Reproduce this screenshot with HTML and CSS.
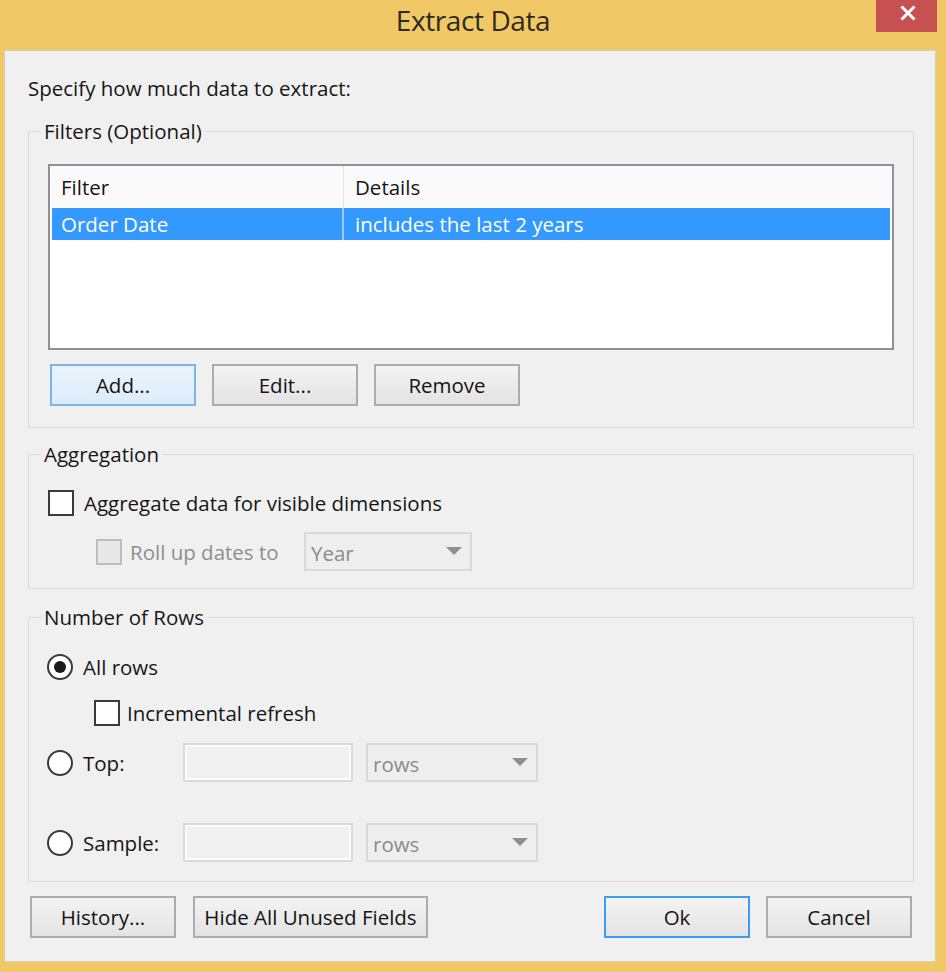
FILE: index.html
```html
<!DOCTYPE html>
<html>
<head>
<meta charset="utf-8">
<title>Extract Data</title>
<link rel="stylesheet" href="styles.css">
</head>
<body>
<div class="window">
  <div class="titlebar">
    <div class="tb-spacer"></div>
    <div class="title">Extract Data</div>
    <div class="close">
      <svg width="18" height="16" viewBox="0 0 18 16"><path d="M2.5 1.5 L15.5 14.5 M15.5 1.5 L2.5 14.5" stroke="#fff" stroke-width="3" stroke-linecap="butt" fill="none"/></svg>
    </div>
  </div>
  <div class="client">
    <p class="intro">Specify how much data to extract:</p>

    <fieldset class="group group-filters">
      <legend>Filters (Optional)</legend>
      <div class="table">
        <div class="thead">
          <div class="cell c1">Filter</div>
          <div class="cell c2">Details</div>
        </div>
        <div class="trow selected">
          <div class="cell c1">Order Date</div>
          <div class="cell c2">includes the last 2 years</div>
        </div>
      </div>
      <div class="btnrow">
        <button class="btn btn-hot">Add...</button>
        <button class="btn">Edit...</button>
        <button class="btn">Remove</button>
      </div>
    </fieldset>

    <fieldset class="group group-agg">
      <legend>Aggregation</legend>
      <div class="line line-agg">
        <span class="check"></span>
        <span class="lbl">Aggregate data for visible dimensions</span>
      </div>
      <div class="line line-roll">
        <div class="roll-label">
          <span class="check disabled"></span>
          <span class="lbl muted">Roll up dates to</span>
        </div>
        <div class="combo combo-year"><span>Year</span><span class="arrow"></span></div>
      </div>
    </fieldset>

    <fieldset class="group group-rows">
      <legend>Number of Rows</legend>
      <div class="line line-all">
        <span class="radio on"></span>
        <span class="lbl">All rows</span>
      </div>
      <div class="line line-inc">
        <span class="check"></span>
        <span class="lbl lbl-inc">Incremental refresh</span>
      </div>
      <div class="line line-top">
        <div class="opt">
          <span class="radio"></span>
          <span class="lbl">Top:</span>
        </div>
        <div class="field"></div>
        <div class="combo combo-rows"><span>rows</span><span class="arrow"></span></div>
      </div>
      <div class="line line-sample">
        <div class="opt">
          <span class="radio"></span>
          <span class="lbl">Sample:</span>
        </div>
        <div class="field"></div>
        <div class="combo combo-rows"><span>rows</span><span class="arrow"></span></div>
      </div>
    </fieldset>

    <div class="footer">
      <button class="btn">History...</button>
      <button class="btn btn-wide">Hide All Unused Fields</button>
      <button class="btn btn-default">Ok</button>
      <button class="btn">Cancel</button>
    </div>
  </div>
</div>
</body>
</html>
```

FILE: styles.css
```css
* { box-sizing: border-box; }
html, body { margin: 0; padding: 0; }
body {
  background: #F0C966;
  font-family: "Open Sans", "Noto Sans", sans-serif;
  font-size: 20.5px;
  color: #161616;
  width: 946px;
  height: 972px;
  overflow: hidden;
}
.window {
  width: 946px;
  height: 972px;
  display: flex;
  flex-direction: column;
}
.titlebar {
  height: 50px;
  flex: none;
  display: grid;
  grid-template-columns: 1fr auto 1fr;
}
.title {
  font-size: 28px;
  line-height: 40px;
  color: #2d2a22;
  letter-spacing: -0.4px;
}
.close {
  justify-self: end;
  align-self: start;
  margin-right: 9px;
  width: 61px;
  height: 32px;
  background: #C75050;
  display: flex;
  align-items: center;
  justify-content: center;
  padding-left: 3px;
  padding-bottom: 6px;
}
.client {
  flex: 1;
  margin: 0 10px 10px 4px;
  background: #F0F0F0;
  border: 1px solid #D8CFB8;
  padding: 24px 21px 0 23px;
}
.intro {
  margin: 0;
  line-height: 26px;
  padding-left: 0;
}
.group {
  margin: 0;
  border: 1px solid #DCDCDC;
  padding: 0 18px 0 19px;
  min-width: 0;
}
.group legend {
  line-height: 26px;
  padding: 0 3px;
  margin-left: -7px;
}
.group-filters { margin-top: 17px; padding-top: 20px; padding-bottom: 21px; }
.group-agg { margin-top: 13px; padding-top: 23px; padding-bottom: 17px; }
.group-rows { margin-top: 15px; padding-top: 24px; padding-bottom: 19px; }

/* table */
.table {
  width: 846px;
  height: 186px;
  border: 2px solid #8E9199;
  background: #fff;
}
.thead {
  height: 42px;
  display: flex;
  background: #FAFAFA;
}
.thead .cell {
  display: flex;
  align-items: center;
}
.thead .c1 {
  width: 294px;
  padding-left: 11px;
  border-right: 1px solid #E3E3E3;
}
.thead .c2 { padding-left: 11px; flex: 1; }
.trow {
  height: 32px;
  margin: 0 2px;
  display: grid;
  grid-template-columns: 290px 1fr;
  column-gap: 2px;
}
.trow.selected { background: #9CCBFB; }
.trow .cell {
  display: flex;
  align-items: center;
  color: #fff;
  background: #3399FF;
}
.trow .c1 { padding-left: 9px; }
.trow .c2 { padding-left: 11px; }

/* buttons */
.btnrow {
  margin-top: 14px;
  margin-left: 2px;
  display: flex;
  gap: 16px;
}
.btn {
  width: 146px;
  height: 42px;
  font-family: inherit;
  font-size: 20.5px;
  color: #141414;
  border: 2px solid #ACACAC;
  background: linear-gradient(#F3F3F3, #E3E3E3);
  padding: 0;
  margin: 0;
  display: flex;
  align-items: center;
  justify-content: center;
}
.btn-hot {
  border-color: #7EB4EA;
  background: linear-gradient(#EBF4FC, #DCECFC);
}
.btn-default {
  border-color: #3C9BF5;
  margin-left: auto;
}
.btn-wide { width: 235px; }

/* lines */
.line {
  display: flex;
  align-items: center;
}
.line-agg { height: 26px; }
.line-agg .lbl { margin-left: 10px; }
.line-roll { height: 39px; margin-top: 16px; padding-left: 48px; }
.roll-label {
  width: 208px;
  display: flex;
  align-items: center;
}
.roll-label .lbl { margin-left: 8px; }
.muted { color: #8E8E8E; }

.check {
  width: 26px;
  height: 26px;
  flex: none;
  border: 2px solid #3A3A3A;
  background: #fff;
}
.check.disabled {
  border-color: #BDBDBD;
  background: #E8E8E8;
}
.radio {
  width: 26px;
  height: 26px;
  flex: none;
  border: 2px solid #3A3A3A;
  border-radius: 50%;
  background: #fff;
  display: flex;
  align-items: center;
  justify-content: center;
}
.radio.on::after {
  content: "";
  width: 12px;
  height: 12px;
  border-radius: 50%;
  background: #1A1A1A;
}

.combo {
  height: 39px;
  border: 2px solid #D9D9D9;
  background: #EEEEEE;
  color: #8B8B8B;
  display: flex;
  align-items: center;
  justify-content: space-between;
  padding: 2px 8px 0 5px;
}
.combo-year { width: 168px; }
.combo-rows { width: 172px; margin-left: 13px; }
.arrow {
  width: 0;
  height: 0;
  border-left: 8px solid transparent;
  border-right: 8px solid transparent;
  border-top: 8px solid #8F8F8F;
  margin-top: -4px;
}

.line-all { height: 26px; margin-left: -1px; }
.line-all .lbl { margin-left: 10px; }
.line-inc { height: 26px; margin-top: 20px; padding-left: 46px; }
.lbl-inc { margin-left: 7px; }
.line-top { height: 39px; margin-top: 17px; margin-left: -1px; }
.line-sample { height: 39px; margin-top: 41px; margin-left: -1px; }
.opt {
  width: 136px;
  display: flex;
  align-items: center;
}
.opt .lbl { margin-left: 10px; }
.field {
  width: 170px;
  height: 39px;
  border: 2px solid #DADADA;
  background: #F0F0F0;
  box-shadow: inset 0 0 0 2px #FBFBFB;
}

.footer {
  margin-top: 14px;
  padding: 0 2px;
  display: flex;
  gap: 17px;
}
.footer .btn-default + .btn { margin-left: -1px; }
```
